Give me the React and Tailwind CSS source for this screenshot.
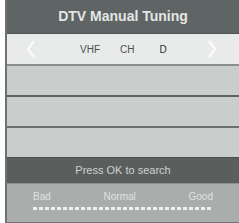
export default function App() {
  const dots = Array.from({ length: 30 });
  return (
    <div className="w-[239px] h-[223px] bg-white overflow-hidden" style={{ fontFamily: '"Liberation Sans", Arial, sans-serif' }}>
      <div className="ml-[5px] w-[234px] h-[223px] flex flex-col border-l-2 border-b border-[#6e7372] bg-[#c9cdcc]">
        <div className="h-[34px] shrink-0 bg-[#5e6564] flex items-center justify-center text-[14px] font-bold text-[#e4e6e6] border-b border-[#4f5554]">
          DTV Manual Tuning
        </div>
        <div className="h-[30px] shrink-0 bg-[#e9ebea] flex items-center text-[10px] text-[#4a4f4e] relative">
          <svg className="absolute left-[19px] top-[6px]" width="10" height="18" viewBox="0 0 10 18">
            <path d="M8 1 L2 9 L8 17" fill="none" stroke="#fbfbfb" strokeWidth="2.2" />
          </svg>
          <span className="ml-[73px]">VHF</span>
          <span className="ml-[20px]">CH</span>
          <span className="ml-[25px] text-[#2e3231]">D</span>
          <svg className="absolute left-[200px] top-[6px]" width="10" height="18" viewBox="0 0 10 18">
            <path d="M2 1 L8 9 L2 17" fill="none" stroke="#fbfbfb" strokeWidth="2.2" />
          </svg>
        </div>
        <div className="h-[2px] shrink-0 bg-[#8a8f8e]" />
        <div className="h-[29px] shrink-0" />
        <div className="h-[2px] shrink-0 bg-[#5f6463]" />
        <div className="h-[29px] shrink-0" />
        <div className="h-[2px] shrink-0 bg-[#6a6f6e]" />
        <div className="h-[29px] shrink-0" />
        <div className="h-[26px] shrink-0 bg-[#5a5f5e] flex items-center justify-center text-[11px] text-[#cfd2d1] border-t border-[#4a4f4e]">
          Press OK to search
        </div>
        <div className="flex-1 bg-[#a9aead] flex flex-col pt-[7px] px-[26px] border-t border-[#8d9291]">
          <div className="flex justify-between text-[10px] text-[#dfe2e1] leading-[12px]">
            <span>Bad</span>
            <span>Normal</span>
            <span>Good</span>
          </div>
          <div className="flex gap-[2px] mt-[4px]">
            {dots.map((_, i) => (
              <div key={i} className="w-[4px] h-[3px] bg-[#eef0ef]" />
            ))}
          </div>
        </div>
      </div>
    </div>
  );
}
